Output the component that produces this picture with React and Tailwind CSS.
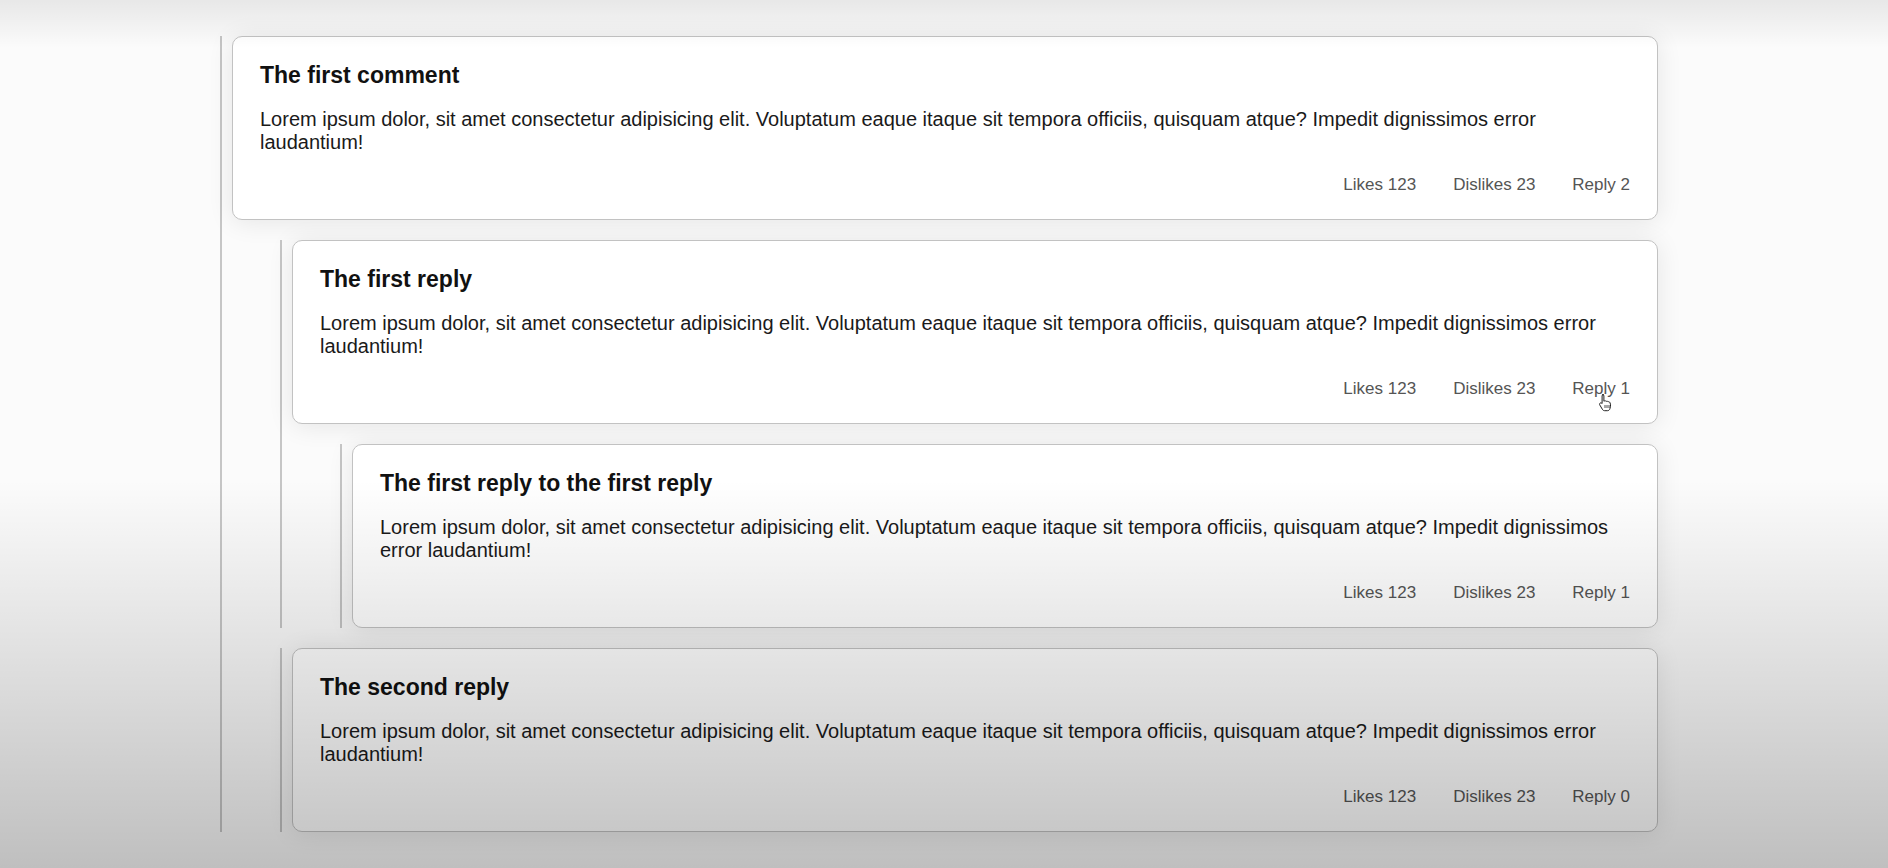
import React from "react";

const comments = [
  {
    id: 1,
    title: "The first comment",
    likes: 123,
    dislikes: 23,
    replies: [
      {
        id: 2,
        title: "The first reply",
        likes: 123,
        dislikes: 23,
        cursor: true,
        replies: [
          {
            id: 3,
            title: "The first reply to the first reply",
            likes: 123,
            dislikes: 23,
            replyCount: 1,
            replies: [],
          },
        ],
      },
      {
        id: 4,
        title: "The second reply",
        likes: 123,
        dislikes: 23,
        replies: [],
      },
    ],
  },
];

const body =
  "Lorem ipsum dolor, sit amet consectetur adipisicing elit. Voluptatum eaque itaque sit tempora officiis, quisquam atque? Impedit dignissimos error laudantium!";

/* ===== little hand pointer left on "Reply 1" ===== */
const HandCursor = () => (
  <svg
    className="absolute left-[26px] top-[14px] pointer-events-none"
    width="15"
    height="19"
    viewBox="0 0 15 19"
  >
    <path
      d="M4.5 1.5c.8 0 1.4.6 1.4 1.4v5.3l.3-.1c.6-.5 1.6-.4 2 .3.6-.4 1.5-.2 1.9.4.6-.3 1.4 0 1.7.6l.3.6c.5 1.1.6 2.5.3 3.8l-.5 2c-.3 1.1-1.3 1.9-2.5 1.9H6.6c-.8 0-1.5-.4-2-1L1.8 12c-.5-.7-.3-1.6.4-2 .6-.3 1.3-.2 1.7.3l.2.2V2.9c0-.8.6-1.4 1.4-1.4z"
      fill="#fff"
      stroke="#222"
      strokeWidth="1"
      strokeLinejoin="round"
    />
    <path d="M7 12v3M9 12v3M11 12v3" stroke="#222" strokeWidth="0.8" />
  </svg>
);

const CommentCard = ({ comment }) => {
  const replyCount = comment.replyCount ?? comment.replies.length;

  return (
    <div className="bg-white border border-[#c2c2c2] rounded-[10px] pt-[25px] pb-[24px] px-[27px] shadow-[0_2px_26px_rgba(0,0,0,0.09)]">
      <h3 className="text-[23px] leading-[26px] font-bold text-[#111]">
        {comment.title}
      </h3>
      <p className="mt-[20px] text-[20px] leading-[23px] text-[#1a1a1a]">
        {body}
      </p>
      <div className="mt-[21px] flex justify-end gap-[37px] text-[17px] leading-[20px] text-[#555]">
        <span>Likes {comment.likes}</span>
        <span>Dislikes {comment.dislikes}</span>
        <span className="relative">
          Reply {replyCount}
          {comment.cursor && <HandCursor />}
        </span>
      </div>
    </div>
  );
};

const Comment = ({ comment }) => (
  <div className="border-l-2 border-[#c6c6c6] pl-[10px]">
    <CommentCard comment={comment} />
    {comment.replies.length > 0 && (
      <div className="ml-[48px] mt-[20px] flex flex-col gap-[20px]">
        {comment.replies.map((reply) => (
          <Comment key={reply.id} comment={reply} />
        ))}
      </div>
    )}
  </div>
);

export default function App() {
  return (
    <div className="relative h-[868px] w-full overflow-hidden bg-[#fbfbfb] font-['Liberation_Sans',Arial,sans-serif]">
      <div className="pt-[36px] pl-[220px] w-[1658px]">
        {comments.map((comment) => (
          <Comment key={comment.id} comment={comment} />
        ))}
      </div>

      {/* video vignette over the whole frame */}
      <div className="absolute inset-0 pointer-events-none bg-[linear-gradient(to_bottom,rgba(0,0,0,0.08)_0px,rgba(0,0,0,0)_48px,rgba(0,0,0,0)_480px,rgba(0,0,0,0.24)_100%)]" />
    </div>
  );
}
